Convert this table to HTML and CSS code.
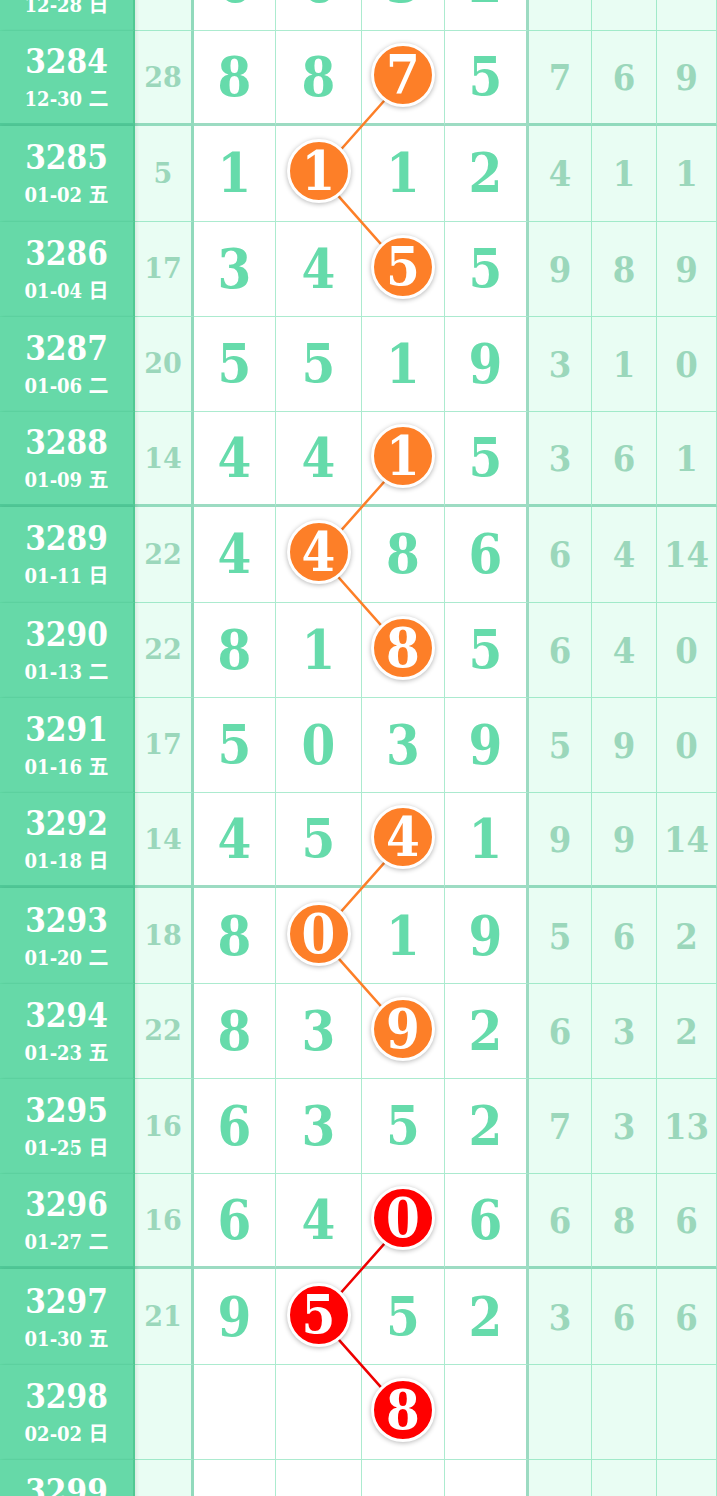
FILE: index.html
```html
<!DOCTYPE html>
<html lang="zh-CN">
<head>
    <meta charset="UTF-8">
    <meta name="viewport" content="width=device-width, initial-scale=1.0">
    <title>走势图</title>
    <link rel="stylesheet" href="styles.css">
</head>
<body>

    <div class="chart">
        <!-- 连线 -->
        <svg class="links" width="717" height="1560" viewBox="0 0 717 1560">
            <polyline class="orange" points="403.5,143 319,238.2 403.5,333.5"/>
            <polyline class="orange" points="403.5,524 319,619.3 403.5,714.6"/>
            <polyline class="orange" points="403.5,905.1 319,1000.4 403.5,1095.6"/>
            <polyline class="red" points="403.5,1286.1 319,1381.4 403.5,1476.7"/>
        </svg>

        <div class="row">
            <div class="issue"><b>3283</b><span>12-28 日</span></div>
            <div class="sum">15</div>
            <div class="d">6</div><div class="d">6</div><div class="d">3</div><div class="d">2</div>
            <div class="s">4</div><div class="s">2</div><div class="s">5</div>
        </div>

        <div class="row grp">
            <div class="issue"><b>3284</b><span>12-30 二</span></div>
            <div class="sum">28</div>
            <div class="d">8</div><div class="d">8</div><div class="d"><i class="ball">7</i></div><div class="d">5</div>
            <div class="s">7</div><div class="s">6</div><div class="s">9</div>
        </div>

        <div class="row">
            <div class="issue"><b>3285</b><span>01-02 五</span></div>
            <div class="sum">5</div>
            <div class="d">1</div><div class="d"><i class="ball">1</i></div><div class="d">1</div><div class="d">2</div>
            <div class="s">4</div><div class="s">1</div><div class="s">1</div>
        </div>

        <div class="row">
            <div class="issue"><b>3286</b><span>01-04 日</span></div>
            <div class="sum">17</div>
            <div class="d">3</div><div class="d">4</div><div class="d"><i class="ball">5</i></div><div class="d">5</div>
            <div class="s">9</div><div class="s">8</div><div class="s">9</div>
        </div>

        <div class="row">
            <div class="issue"><b>3287</b><span>01-06 二</span></div>
            <div class="sum">20</div>
            <div class="d">5</div><div class="d">5</div><div class="d">1</div><div class="d">9</div>
            <div class="s">3</div><div class="s">1</div><div class="s">0</div>
        </div>

        <div class="row grp">
            <div class="issue"><b>3288</b><span>01-09 五</span></div>
            <div class="sum">14</div>
            <div class="d">4</div><div class="d">4</div><div class="d"><i class="ball">1</i></div><div class="d">5</div>
            <div class="s">3</div><div class="s">6</div><div class="s">1</div>
        </div>

        <div class="row">
            <div class="issue"><b>3289</b><span>01-11 日</span></div>
            <div class="sum">22</div>
            <div class="d">4</div><div class="d"><i class="ball">4</i></div><div class="d">8</div><div class="d">6</div>
            <div class="s">6</div><div class="s">4</div><div class="s">14</div>
        </div>

        <div class="row">
            <div class="issue"><b>3290</b><span>01-13 二</span></div>
            <div class="sum">22</div>
            <div class="d">8</div><div class="d">1</div><div class="d"><i class="ball">8</i></div><div class="d">5</div>
            <div class="s">6</div><div class="s">4</div><div class="s">0</div>
        </div>

        <div class="row">
            <div class="issue"><b>3291</b><span>01-16 五</span></div>
            <div class="sum">17</div>
            <div class="d">5</div><div class="d">0</div><div class="d">3</div><div class="d">9</div>
            <div class="s">5</div><div class="s">9</div><div class="s">0</div>
        </div>

        <div class="row grp">
            <div class="issue"><b>3292</b><span>01-18 日</span></div>
            <div class="sum">14</div>
            <div class="d">4</div><div class="d">5</div><div class="d"><i class="ball">4</i></div><div class="d">1</div>
            <div class="s">9</div><div class="s">9</div><div class="s">14</div>
        </div>

        <div class="row">
            <div class="issue"><b>3293</b><span>01-20 二</span></div>
            <div class="sum">18</div>
            <div class="d">8</div><div class="d"><i class="ball">0</i></div><div class="d">1</div><div class="d">9</div>
            <div class="s">5</div><div class="s">6</div><div class="s">2</div>
        </div>

        <div class="row">
            <div class="issue"><b>3294</b><span>01-23 五</span></div>
            <div class="sum">22</div>
            <div class="d">8</div><div class="d">3</div><div class="d"><i class="ball">9</i></div><div class="d">2</div>
            <div class="s">6</div><div class="s">3</div><div class="s">2</div>
        </div>

        <div class="row">
            <div class="issue"><b>3295</b><span>01-25 日</span></div>
            <div class="sum">16</div>
            <div class="d">6</div><div class="d">3</div><div class="d">5</div><div class="d">2</div>
            <div class="s">7</div><div class="s">3</div><div class="s">13</div>
        </div>

        <div class="row grp">
            <div class="issue"><b>3296</b><span>01-27 二</span></div>
            <div class="sum">16</div>
            <div class="d">6</div><div class="d">4</div><div class="d"><i class="ball red">0</i></div><div class="d">6</div>
            <div class="s">6</div><div class="s">8</div><div class="s">6</div>
        </div>

        <div class="row">
            <div class="issue"><b>3297</b><span>01-30 五</span></div>
            <div class="sum">21</div>
            <div class="d">9</div><div class="d"><i class="ball red">5</i></div><div class="d">5</div><div class="d">2</div>
            <div class="s">3</div><div class="s">6</div><div class="s">6</div>
        </div>

        <div class="row">
            <div class="issue"><b>3298</b><span>02-02 日</span></div>
            <div class="sum"></div>
            <div class="d"></div><div class="d"></div><div class="d"><i class="ball red">8</i></div><div class="d"></div>
            <div class="s"></div><div class="s"></div><div class="s"></div>
        </div>

        <div class="row">
            <div class="issue"><b>3299</b><span>02-04 二</span></div>
            <div class="sum"></div>
            <div class="d"></div><div class="d"></div><div class="d"></div><div class="d"></div>
            <div class="s"></div><div class="s"></div><div class="s"></div>
        </div>
    </div>

</body>
</html>
```

FILE: styles.css
```css
body {
    margin: 0;
    padding: 0;
    background: #fff;
    font-family: "DejaVu Serif", "Liberation Serif", "Noto Sans CJK SC", serif;
    overflow: hidden;
    height: 1496px;
}

.chart {
    position: relative;
    width: 717px;
    margin-top: -64.27px;
}

/* 连线层 */
.links {
    position: absolute;
    top: 0;
    left: 0;
    z-index: 1;
    pointer-events: none;
}

.links polyline {
    fill: none;
    stroke-width: 2.5;
}

.links .orange {
    stroke: #fd7f28;
}

.links .red {
    stroke: #ee0000;
}

.row {
    display: grid;
    grid-template-columns: 135px 59px 82px 86px 83px 84px 63px 65px 60px;
    height: 95.27px;
}

.row > div {
    box-sizing: border-box;
    display: flex;
    align-items: center;
    justify-content: center;
    border-right: 1px solid rgba(90, 215, 160, 0.5);
    border-bottom: 1px solid rgba(90, 215, 160, 0.5);
    font-weight: bold;
}

.row.grp > div {
    border-bottom: 3px solid rgba(60, 185, 135, 0.5);
}

/* 期号 */
.issue {
    flex-direction: column;
    background: #66d9a8;
    color: #fff;
    box-shadow: 2px 0 3px rgba(0, 0, 0, 0.07);
    position: relative;
    z-index: 2;
}

.row > .issue {
    border-right: 2px solid rgba(40, 170, 110, 0.35);
}

.issue b {
    font-size: 33px;
    font-weight: 600;
    line-height: 40px;
    font-stretch: condensed;
    margin-top: 1px;
}

.issue span {
    font-size: 20px;
    line-height: 28px;
    font-stretch: condensed;
    margin-top: 3px;
}

.sum {
    background: #e9fdf3;
    color: #9bd7bb;
    font-size: 27px;
}

.row > .sum {
    border-right: 3px solid rgba(60, 185, 135, 0.5);
}

.d {
    color: #66dbab;
    font-size: 54px;
    font-stretch: condensed;
}

.row > .d:nth-child(6) {
    border-right: 3px solid rgba(60, 185, 135, 0.5);
}

.s {
    background: #e9fdf3;
    color: #9bd7bb;
    font-size: 36px;
    font-stretch: condensed;
}

/* 开奖号码球 */
.ball {
    position: relative;
    z-index: 2;
    box-sizing: border-box;
    width: 64px;
    height: 64px;
    border: 3px solid #fff;
    border-radius: 50%;
    background: #fd7f28;
    color: #fff;
    font-style: normal;
    display: flex;
    align-items: center;
    justify-content: center;
    box-shadow: 0 1px 5px rgba(0, 0, 0, 0.3);
    margin-top: -4px;
}

.ball.red {
    background: #ff0000;
}
```
